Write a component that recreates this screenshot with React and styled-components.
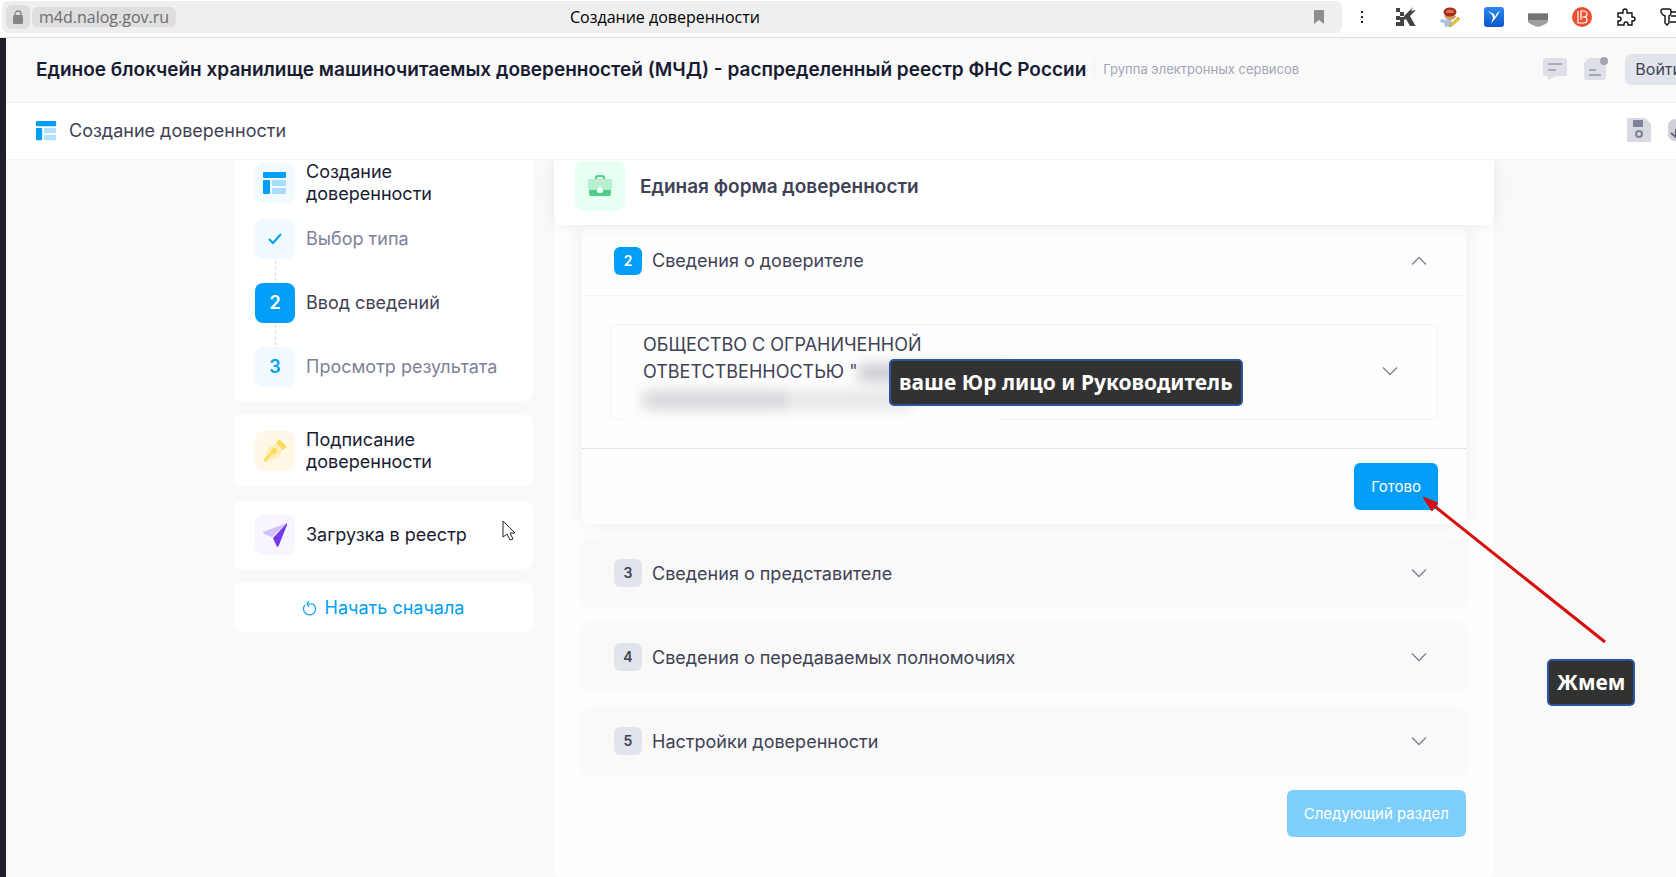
import React from 'react';
import styled, { createGlobalStyle, css } from 'styled-components';

const colors = {
  primary: '#009ef7',
  primaryLight: '#f1faff',
  text: '#181c32',
  textSoft: '#3f4254',
  muted: '#7e8299',
  faint: '#a1a5b7',
  page: '#f9f9f9',
  badge: '#e1e4ea',
};

const GlobalStyle = createGlobalStyle`
  * {
    box-sizing: border-box;
  }
  body {
    margin: 0;
    background: ${colors.page};
    color: ${colors.textSoft};
    font-family: Inter, Roboto, sans-serif;
    font-size: 18px;
  }
  button {
    font-family: inherit;
    border: 0;
    padding: 0;
    background: none;
    color: inherit;
    cursor: pointer;
  }
  a {
    color: inherit;
    text-decoration: none;
  }
  h1, h2, p, ol {
    margin: 0;
    padding: 0;
  }
  svg {
    display: block;
    flex: none;
  }
`;

const Window = styled.div`
  overflow: hidden;
  min-height: 100vh;
  display: flex;
  flex-direction: column;
`;

/* browser bar */

const BrowserBar = styled.div`
  display: flex;
  align-items: center;
  gap: 8px;
  height: 38px;
  margin-right: -6px;
  padding: 0 0 3px 2px;
  background: #fff;
  border-bottom: 1px solid #dfdfdf;
  font-family: "Open Sans", "Noto Sans", sans-serif;
  font-size: 16px;
`;

const Omnibox = styled.div`
  flex: 1;
  display: grid;
  grid-template-columns: 1fr auto 1fr;
  align-items: center;
  height: 32px;
  padding: 0 18px 0 4px;
  border-radius: 6px;
  background: #efefef;
`;

const Address = styled.div`
  display: flex;
  align-items: center;
  gap: 2px;
`;

const LockButton = styled.button`
  display: flex;
  align-items: center;
  justify-content: center;
  width: 24px;
  height: 24px;
  border-radius: 6px;
  background: #dedede;
`;

const Domain = styled.button`
  height: 20px;
  padding: 0 7px;
  border-radius: 6px;
  background: #dedede;
  color: #6d6d6d;
  font-size: 16px;
  line-height: 20px;
`;

const PageTitle = styled.span`
  color: #000;
`;

const Bookmark = styled.button`
  justify-self: end;
`;

const Extensions = styled.div`
  display: flex;
  gap: 20px;
`;

const ExtensionButton = styled.button`
  display: flex;
  align-items: center;
  justify-content: center;
  width: 24px;
  height: 24px;
`;

/* site */

const Site = styled.div`
  flex: 1;
  display: flex;
  flex-direction: column;
  margin-right: -46px;
  border-left: 6px solid #1e1e2d;
`;

const Bar = styled.header`
  position: relative;
  z-index: 1;
  display: flex;
  align-items: center;
  height: ${p => p.$height};
  padding: 0 30px 2px;
  background: ${p => (p.$white ? '#fff' : colors.page)};
  border-bottom: 1px solid #f1f1f2;
  white-space: nowrap;
`;

const SiteTitle = styled.h1`
  font-size: 19px;
  font-weight: 600;
  color: ${colors.text};
`;

const SiteGroup = styled.span`
  margin-left: 8px;
  padding-left: 8px;
  border-left: 1px solid #eff2f5;
  color: ${colors.faint};
  font-size: 13px;
  line-height: 20px;
`;

const BarActions = styled.div`
  display: flex;
  align-items: center;
  gap: 17px;
  margin-left: auto;
`;

const LoginButton = styled.button`
  height: 31px;
  padding: 0 10px;
  border-radius: 6px;
  background: ${colors.badge};
  color: ${colors.textSoft};
  font-size: 16px;
`;

const SubTitle = styled.span`
  margin-left: 12px;
  font-size: 18px;
`;

const Content = styled.main`
  display: flex;
  align-items: flex-start;
  gap: 21px;
  width: 100%;
  max-width: 1260px;
  margin: 0 auto;
`;

/* sidebar */

const Sidebar = styled.nav`
  display: flex;
  flex-direction: column;
  gap: 14px;
  flex: 0 0 299px;
  color: ${colors.text};
`;

const SideCard = styled.div`
  padding: 14px 21px;
  border-radius: 8px;
  background: #fff;
  ${p => p.$scrolled && css`
    padding-top: 1px;
    border-top-left-radius: 0;
    border-top-right-radius: 0;
  `}
`;

const SideLink = styled.a`
  display: flex;
  align-items: center;
  gap: 11px;
  line-height: 22px;
`;

const Tile = styled.span`
  display: flex;
  align-items: center;
  justify-content: center;
  flex: none;
  width: ${p => p.$size || '40px'};
  height: ${p => p.$size || '40px'};
  border-radius: 8px;
  background: ${p => p.$bg || colors.primaryLight};
  color: ${p => p.$color || colors.primary};
  font-weight: 600;
`;

const Steps = styled.ol`
  margin-top: 14px;
  list-style: none;
`;

const Step = styled.li`
  color: ${p => (p.$active ? colors.textSoft : colors.muted)};
  &:not(:first-child)::before {
    content: '';
    display: block;
    height: 20px;
    margin: 2px 0 2px 20px;
    border-left: 1px dashed #d8dbe0;
  }
`;

const RestartButton = styled.button`
  display: flex;
  align-items: center;
  justify-content: center;
  gap: 8px;
  height: 49px;
  border-radius: 8px;
  background: #fff;
  color: ${colors.primary};
  font-size: 18px;
`;

/* form panel */

const Panel = styled.section`
  position: relative;
  flex: 1;
  padding-bottom: 40px;
  border-radius: 0 0 8px 8px;
  background: #fefefe;
`;

const PanelHeader = styled.header`
  position: relative;
  display: flex;
  align-items: center;
  gap: 15px;
  padding: 1px 21px 14px;
  border-radius: 0 0 8px 8px;
  background: #fff;
  box-shadow: 0 0 20px rgba(0, 0, 0, 0.07);
`;

const PanelTitle = styled.h2`
  font-size: 19px;
  font-weight: 600;
`;

const Sections = styled.div`
  display: flex;
  flex-direction: column;
  gap: 14px;
  padding: 1px 28px 0;
`;

const SectionCard = styled.section`
  border-radius: 8px;
  background: ${p => (p.$open ? '#fefefe' : colors.page)};
  box-shadow: ${p => (p.$open ? '0 0 20px rgba(0, 0, 0, 0.08)' : '0 0 12px rgba(0, 0, 0, 0.02)')};
`;

const SectionToggle = styled.button`
  display: flex;
  align-items: center;
  gap: 10px;
  width: 100%;
  height: 70px;
  padding: 0 39px 0 32px;
  font-size: 18px;
  text-align: left;
  border-bottom: ${p => (p.$open ? '1px solid #f1f1f2' : '0')};
  svg {
    margin-left: auto;
  }
`;

const Badge = styled.span`
  width: 28px;
  border-radius: 6px;
  background: ${p => (p.$active ? colors.primary : colors.badge)};
  color: ${p => (p.$active ? '#fff' : colors.textSoft)};
  font-size: 14px;
  font-weight: 600;
  line-height: 28px;
  text-align: center;
`;

const SectionBody = styled.div`
  padding: 28px;
  border-bottom: 1px solid #dfe2ec;
`;

const CompanyCard = styled.button`
  position: relative;
  display: flex;
  align-items: center;
  justify-content: space-between;
  width: 100%;
  height: 96px;
  padding: 0 39px 2px 32px;
  border: 1px solid #f3f3f4;
  border-radius: 8px;
  font-size: 18px;
  line-height: 27px;
  text-align: left;
  &::after {
    content: '';
    position: absolute;
    left: 12px;
    bottom: -1px;
    width: 376px;
    height: 1px;
    background: #fefefe;
  }
`;

const CompanyName = styled.span`
  white-space: nowrap;
`;

const Hidden = styled.span`
  display: inline-block;
  width: ${p => p.$width};
  height: 18px;
  border-radius: 4px;
  background: ${p => p.$shade};
  filter: blur(7px);
  vertical-align: middle;
`;

const ButtonRow = styled.div`
  display: flex;
  justify-content: flex-end;
  padding: ${p => (p.$inset ? '14px 28px' : '0')};
`;

const PrimaryButton = styled.button`
  height: 47px;
  padding: 0 17px;
  border-radius: 6px;
  background: ${colors.primary};
  color: #fff;
  font-size: 15px;
  &:disabled {
    background: #7ecefb;
  }
`;

/* notes over the page */

const Note = styled.div`
  position: absolute;
  left: ${p => p.$left};
  top: ${p => p.$top};
  padding: 0 8px;
  border: 2px solid #2a559f;
  border-radius: 5px;
  background: #323232;
  color: #fff;
  font-family: "Noto Sans", "Open Sans", sans-serif;
  font-size: 21px;
  font-weight: 700;
  line-height: 43px;
  white-space: nowrap;
`;

const Arrow = styled.svg`
  position: absolute;
  left: 865px;
  top: 333px;
  pointer-events: none;
`;

const Cursor = styled.svg`
  position: absolute;
  left: -52px;
  top: 360px;
  pointer-events: none;
`;

const LayoutIcon = ({ size }) => (
  <svg width={size} height={size} viewBox="0 0 24 24" fill={colors.primary}>
    <rect x="0" y="1" width="23" height="6" rx="1" />
    <rect x="0" y="9" width="7" height="14" rx="1" />
    <rect x="9" y="9" width="14" height="6" rx="1" opacity="0.3" />
    <rect x="9" y="17" width="14" height="6" rx="1" opacity="0.3" />
  </svg>
);

const Chevron = ({ up }) => (
  <svg width="16" height="10" viewBox="0 0 16 10" fill="none" stroke={colors.muted} strokeWidth="1.3">
    <path d={up ? 'M1 8.5 8 1.5l7 7' : 'M1 1.5l7 7 7-7'} />
  </svg>
);

const PenIcon = () => (
  <svg width="26" height="26" viewBox="0 0 26 26">
    <path d="M2 23 5 12Q6 9 9 8l6-3 6 6-3 6q-1 3-4 4L4 24Z" fill="#ffeebc" />
    <path d="m17 1 8 8-4 3-7-7Z" fill="#ffdb5c" />
    <path d="M2 23 11 14" stroke="#ffdb5c" strokeWidth="2.5" />
    <circle cx="12" cy="13" r="3" fill="#ffdb5c" />
  </svg>
);

const PlaneIcon = () => (
  <svg width="26" height="26" viewBox="0 0 26 26">
    <path d="M25 1 1 10q0 1 1 2l8 3Z" fill="#d3c2fa" />
    <path d="M25 1 11 16l4 9q1 0 2-2L25 3Z" fill="#7239ea" />
  </svg>
);

const BriefcaseIcon = () => (
  <svg width="26" height="22" viewBox="0 0 26 22">
    <path d="M9 5V3q0-2 2-2h4q2 0 2 2v2" fill="none" stroke="#50cd89" strokeWidth="2" />
    <path d="M2 4h22q1 0 1 1v8q0 2-2 2H3q-2 0-2-2V5q0-1 1-1Z" fill="#b9efd0" />
    <path d="M2 15h8v2h6v-2h8v4q0 2-2 2H4q-2 0-2-2Z" fill="#50cd89" />
    <rect x="10.500" y="12" width="5" height="6" rx="1" fill="#e8fff3" />
  </svg>
);

const LockIcon = () => (
  <svg width="12" height="14" viewBox="0 0 12 14">
    <path d="M3 6V4a3 3 0 0 1 6 0v2" fill="none" stroke="#858585" strokeWidth="1.3" />
    <rect x="1" y="5" width="10" height="9" rx="1.500" fill="#858585" />
  </svg>
);

const extensions = [
  {
    name: 'Меню',
    icon: (
      <svg width="4" height="14" viewBox="0 0 4 14">
        <path d="M1 1h2v2H1zM1 6h2v2H1zM1 11h2v2H1z" fill="#222" />
      </svg>
    ),
  },
  {
    name: 'K',
    icon: (
      <svg width="20" height="20" viewBox="0 0 20 20" fill="#444">
        <path d="M0 1h4v4H0zM4 5h4v4H4zM0 9h4v4H0zM0 15h4v4H0zM4 10h4v9H4z" />
        <path d="M8 9 17 0l-2 4 5-1-6 6 5 9 1 1h-6L10 12l-2 1Z" />
      </svg>
    ),
  },
  {
    name: 'Помощник',
    icon: (
      <svg width="20" height="20" viewBox="0 0 20 20">
        <path d="m1 12 6 1 3-2 2 4-1 4-6 1-1-4-4-1Z" fill="#a9c4df" />
        <path d="M4 8q1 5 6 5t6-4l-6-2Z" fill="#d59b67" />
        <ellipse cx="10" cy="5" rx="6.500" ry="4.500" fill="#a12d1a" />
        <path d="M6 4q4-3 8 0v2H6Z" fill="#d76d4e" />
        <path d="m10 18 8-8 2 2-8 7-3 1Z" fill="#edc92f" stroke="#a27a24" strokeWidth="0.500" />
      </svg>
    ),
  },
  {
    name: 'Птица',
    icon: (
      <svg width="20" height="20" viewBox="0 0 20 20">
        <defs>
          <linearGradient id="bird" x1="0" y1="0" x2="0" y2="1">
            <stop offset="0" stopColor="#2e88f0" />
            <stop offset="1" stopColor="#0757c8" />
          </linearGradient>
        </defs>
        <rect width="20" height="20" rx="3" fill="url(#bird)" />
        <path d="m4 4 6 3 1 3 2-4 3-2-3 5-3 4-3 4 2-6-1-3Z" fill="#fff" />
      </svg>
    ),
  },
  {
    name: 'Щит',
    icon: (
      <svg width="20" height="20" viewBox="0 0 20 20">
        <path d="M0 6h20v7H0Z" fill="#747474" />
        <path d="M0 13h20v2q-3 3-10 5-7-2-10-5Z" fill="#a0a0a0" />
        <path d="M0 6h20v1H0Z" fill="#a0a0a0" />
      </svg>
    ),
  },
  {
    name: 'B',
    icon: (
      <svg width="20" height="20" viewBox="0 0 20 20">
        <circle cx="10" cy="10" r="10" fill="#ec5030" />
        <path d="M6 4v12h6a3 3 0 0 0 0-6h-2 2a3 3 0 0 0 0-6H9v9" fill="none" stroke="#fff" strokeWidth="1.200" />
      </svg>
    ),
  },
  {
    name: 'Расширения',
    icon: (
      <svg width="20" height="20" viewBox="0 0 20 20" fill="none" stroke="#111" strokeWidth="1.400">
        <path d="M2 6h5V4a2 2 0 0 1 4 0v2h5v4h1a2 2 0 0 1 0 4h-1v4h-4v-1a2 2 0 0 0-4 0v1H2v-4h1a2 2 0 0 0 0-4H2Z" />
      </svg>
    ),
  },
  {
    name: 'Пароли',
    icon: (
      <svg width="20" height="20" viewBox="0 0 20 20" fill="none" stroke="#111" strokeWidth="1.400">
        <path d="M3 2h6q2 0 2 2v2q0 2-2 3v7l-2 2-2-2V9Q1 7 1 4q0-2 2-2ZM11 5h8M11 9h8M10 15h9" />
      </svg>
    ),
  },
];

const steps = [
  { mark: '✓', label: 'Выбор типа', done: true },
  { mark: '2', label: 'Ввод сведений', active: true },
  { mark: '3', label: 'Просмотр результата' },
];

const closedSections = [
  { number: 3, title: 'Сведения о представителе' },
  { number: 4, title: 'Сведения о передаваемых полномочиях' },
  { number: 5, title: 'Настройки доверенности' },
];

function Browser() {
  return (
    <BrowserBar>
      <Omnibox>
        <Address>
          <LockButton aria-label="Защищенное соединение"><LockIcon /></LockButton>
          <Domain>m4d.nalog.gov.ru</Domain>
        </Address>
        <PageTitle>Создание доверенности</PageTitle>
        <Bookmark aria-label="Закладка">
          <svg width="10" height="14" viewBox="0 0 10 14">
            <path d="M1 0h8q1 0 1 1v13l-5-4-5 4V1q0-1 1-1Z" fill="#8e8e8e" />
          </svg>
        </Bookmark>
      </Omnibox>
      <Extensions>
        {extensions.map(item => (
          <ExtensionButton key={item.name} aria-label={item.name}>{item.icon}</ExtensionButton>
        ))}
      </Extensions>
    </BrowserBar>
  );
}

function SiteHeader() {
  return (
    <>
      <Bar $height="65px">
        <SiteTitle>
          Единое блокчейн хранилище машиночитаемых доверенностей (МЧД) - распределенный реестр ФНС России
        </SiteTitle>
        <SiteGroup>Группа электронных сервисов</SiteGroup>
        <BarActions>
          <button aria-label="Сообщения">
            <svg width="24" height="24" viewBox="0 0 24 24">
              <path d="M2 1h20q2 0 2 2v14q0 2-2 2h-9l-8 4v-4H2q-2 0-2-2V3q0-2 2-2Z" fill="#dfe0e7" />
              <path d="M5 7h14M5 13h8" stroke="#a8abbc" strokeWidth="2" />
            </svg>
          </button>
          <button aria-label="Уведомления">
            <svg width="24" height="24" viewBox="0 0 24 24">
              <path d="M5 1h11q0 7 6 7v12q0 3-3 3H3q-3 0-3-3V6Z" fill="#dfe0e7" />
              <path d="M5 13h7M5 18h12" stroke="#a1a5b7" strokeWidth="2" />
              <circle cx="20" cy="4" r="4" fill="#a1a5b7" />
            </svg>
          </button>
          <LoginButton>Войти</LoginButton>
        </BarActions>
      </Bar>
      <Bar as="div" $height="57px" $white>
        <LayoutIcon size={21} />
        <SubTitle>Создание доверенности</SubTitle>
        <BarActions>
          <button aria-label="Сохранить">
            <svg width="24" height="24" viewBox="0 0 24 24">
              <path d="M1 0h17l6 6v17q0 1-1 1H1q-1 0-1-1V1q0-1 1-1Z" fill="#d9d9e1" />
              <path d="M6 2h10v7H6Z" fill="#7e8299" />
              <circle cx="12" cy="16" r="3" fill="none" stroke="#7e8299" strokeWidth="2" />
            </svg>
          </button>
          <button aria-label="Скачать">
            <svg width="24" height="24" viewBox="0 0 24 24">
              <rect y="1" width="24" height="22" rx="7" fill="#d0d1d8" />
              <path d="M12 10v8M3 15l5 4V11" fill="none" stroke="#5e6278" strokeWidth="2" />
            </svg>
          </button>
        </BarActions>
      </Bar>
    </>
  );
}

function Navigation() {
  return (
    <Sidebar>
      <SideCard $scrolled>
        <SideLink href="#create">
          <Tile><LayoutIcon size={24} /></Tile>
          <span>Создание<br />доверенности</span>
        </SideLink>
        <Steps>
          {steps.map(step => (
            <Step key={step.label} $active={step.active}>
              <SideLink href="#step">
                <Tile $bg={step.active && colors.primary} $color={step.active && '#fff'}>
                  {step.done ? (
                    <svg width="14" height="12" viewBox="0 0 14 12" fill="none" stroke="currentColor" strokeWidth="2">
                      <path d="m1 6 4 4 8-9" />
                    </svg>
                  ) : step.mark}
                </Tile>
                {step.label}
              </SideLink>
            </Step>
          ))}
        </Steps>
      </SideCard>
      <SideCard>
        <SideLink href="#sign">
          <Tile $bg="#fff8e6"><PenIcon /></Tile>
          <span>Подписание<br />доверенности</span>
        </SideLink>
      </SideCard>
      <SideCard>
        <SideLink href="#upload">
          <Tile $bg="#f8f5ff"><PlaneIcon /></Tile>
          Загрузка в реестр
        </SideLink>
      </SideCard>
      <RestartButton>
        <svg width="14" height="16" viewBox="0 0 14 16" fill="none" stroke="currentColor" strokeWidth="1.200">
          <path d="M2 5a6 6 0 1 0 8-1H4M6 1 4 4l2 3" />
        </svg>
        Начать сначала
      </RestartButton>
    </Sidebar>
  );
}

function Form() {
  return (
    <Panel>
      <PanelHeader>
        <Tile $size="50px" $bg="#e8fff3"><BriefcaseIcon /></Tile>
        <PanelTitle>Единая форма доверенности</PanelTitle>
      </PanelHeader>
      <Sections>
        <SectionCard $open>
          <SectionToggle $open aria-expanded="true">
            <Badge $active>2</Badge>
            Сведения о доверителе
            <Chevron up />
          </SectionToggle>
          <SectionBody>
            <CompanyCard>
              <CompanyName>
                ОБЩЕСТВО С ОГРАНИЧЕННОЙ<br />
                ОТВЕТСТВЕННОСТЬЮ "<Hidden $width="150px" $shade="#c9cad0" /><br />
                <Hidden $width="150px" $shade="#d3d4d9" /><Hidden $width="120px" $shade="#e4e4e8" />
              </CompanyName>
              <Chevron />
            </CompanyCard>
          </SectionBody>
          <ButtonRow $inset>
            <PrimaryButton>Готово</PrimaryButton>
          </ButtonRow>
        </SectionCard>
        {closedSections.map(section => (
          <SectionCard key={section.number}>
            <SectionToggle aria-expanded="false">
              <Badge>{section.number}</Badge>
              {section.title}
              <Chevron />
            </SectionToggle>
          </SectionCard>
        ))}
        <ButtonRow>
          <PrimaryButton disabled>Следующий раздел</PrimaryButton>
        </ButtonRow>
      </Sections>
      <Note $left="335px" $top="199px">ваше Юр лицо и Руководитель</Note>
      <Note $left="993px" $top="499px">Жмем</Note>
      <Arrow width="190" height="154" viewBox="0 0 190 154">
        <path d="M186 149 14 12" stroke="#d90b0b" strokeWidth="3" />
        <path d="m4 4 15 6-4 3-2 5Z" fill="#d90b0b" stroke="#d90b0b" />
      </Arrow>
      <Cursor width="14" height="21" viewBox="0 0 14 21">
        <path d="M1 1v16l4-3 3 6 3-1-3-6h5Z" fill="#fff" stroke="#222433" />
      </Cursor>
    </Panel>
  );
}

export default function App() {
  return (
    <>
      <GlobalStyle />
      <Window>
        <Browser />
        <Site>
          <SiteHeader />
          <Content>
            <Navigation />
            <Form />
          </Content>
        </Site>
      </Window>
    </>
  );
}
